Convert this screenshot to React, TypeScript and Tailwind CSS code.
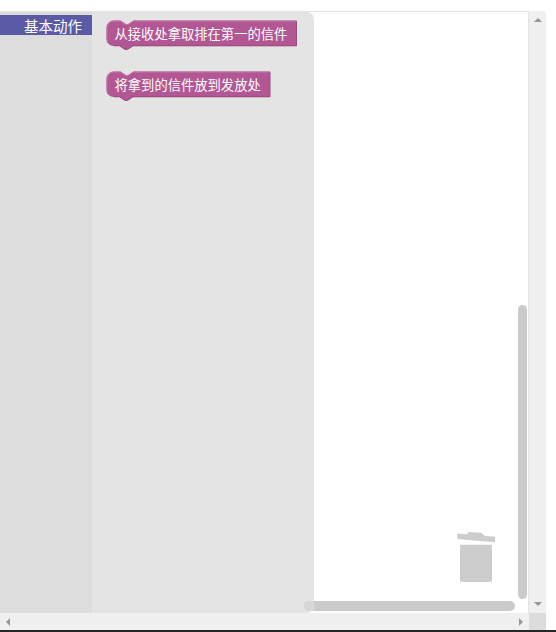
const FONT = "font-['Noto_Sans_CJK_SC',sans-serif]";

function Block({ label, width }: { label: string; width: number }) {
  const right = width - 0.5;
  const body = `M.5 7.7A7.2 7.2 0 0 1 7.7.5H14.5L19.9 4.1H22.1L27.5.5H${right}V26H27L21.6 29.6H19L13.5 26H7.7A7.2 7.2 0 0 1 .5 18.8Z`;
  const light = `M2.5 23.8A6.7 6.7 0 0 1 1 18.8V7.7A6.7 6.7 0 0 1 7.7 1H14.5L19.9 4.6H22.1L27.5 1H${right}`;
  const dark = `M${right} 1V25.8H27L21.6 29.4H19L13.5 25.8H7.7`;
  return (
    <div className="relative h-[26px]">
      <svg className="absolute top-0 left-0 overflow-visible" width={width} height="31" fill="none">
        <path d={body} fill="#b25793" />
        <path d={dark} stroke="#984b7e" />
        <path d={light} stroke="#bf7ba9" />
      </svg>
      <span className={`relative block pl-[8.5px] pt-[4px] text-[13.3px] leading-5 whitespace-nowrap text-white ${FONT}`}>
        {label}
      </span>
    </div>
  );
}

function Trash() {
  return (
    <svg className="absolute left-[456px] top-[518px]" width="42" height="54" fill="#cdcdcd">
      <path d="M1.2 3.5L10.5 4.3L13 2L25.5 2.7L28.5 5.8L39 6.8V12.2L1.2 8.9Z" />
      <path d="M4 14.7H36V49.5Q36 52 33.5 52H6.5Q4 52 4 49.5Z" />
    </svg>
  );
}

export default function App() {
  return (
    <div className="flex h-[632px] w-[556px] flex-col overflow-hidden bg-white pt-[11px]">
      <div className="flex h-[602px] w-[546px]">
        <div className="relative flex w-[529px] border-t border-r border-[#e4e4e4] bg-white">
          <div className="w-[92px] bg-[#ddd] pt-[3px]">
            <div className={`h-5 bg-[#5b5ba5] pl-6 text-[14.5px] leading-[21px] whitespace-nowrap text-white ${FONT}`}>
              基本动作
            </div>
          </div>
          <div className="flex w-[222px] flex-col gap-[25px] rounded-r-[7px] bg-[#e4e4e4] pt-2 pl-[14px]">
            <Block label="从接收处拿取排在第一的信件" width={191} />
            <Block label="将拿到的信件放到发放处" width={164.5} />
          </div>
          <Trash />
          <div className="absolute top-[589px] left-[304px] h-[10px] w-[211px] rounded-full bg-[#cbcbcb]" />
          <div className="absolute top-[589px] left-[304px] h-[10px] w-[10px] rounded-l-full bg-[#d7d7d7]" />
          <div className="absolute top-[293px] left-[517.5px] h-[294px] w-[9.5px] rounded-full bg-[#cbcbcb]" />
        </div>
        <div className="flex w-[17px] flex-col items-center justify-between bg-[#f0f0f0] pt-[7px] pb-[7px]">
          <svg width="8" height="4" fill="#989898"><path d="M0 4L4 0L8 4Z" /></svg>
          <svg width="8" height="4" fill="#989898"><path d="M0 0L4 4L8 0Z" /></svg>
        </div>
      </div>
      <div className="flex h-[17px] w-[546px]">
        <div className="flex w-[529px] items-center justify-between bg-[#f0f0f0] pr-[6px] pl-[6px]">
          <svg width="4" height="8" fill="#989898"><path d="M4 0L0 4L4 8Z" /></svg>
          <svg width="4" height="8" fill="#989898"><path d="M0 0L4 4L0 8Z" /></svg>
        </div>
        <div className="w-[17px] bg-[#dcdcdc]" />
      </div>
      <div className="h-[2px] w-full bg-[#252526]" />
    </div>
  );
}
